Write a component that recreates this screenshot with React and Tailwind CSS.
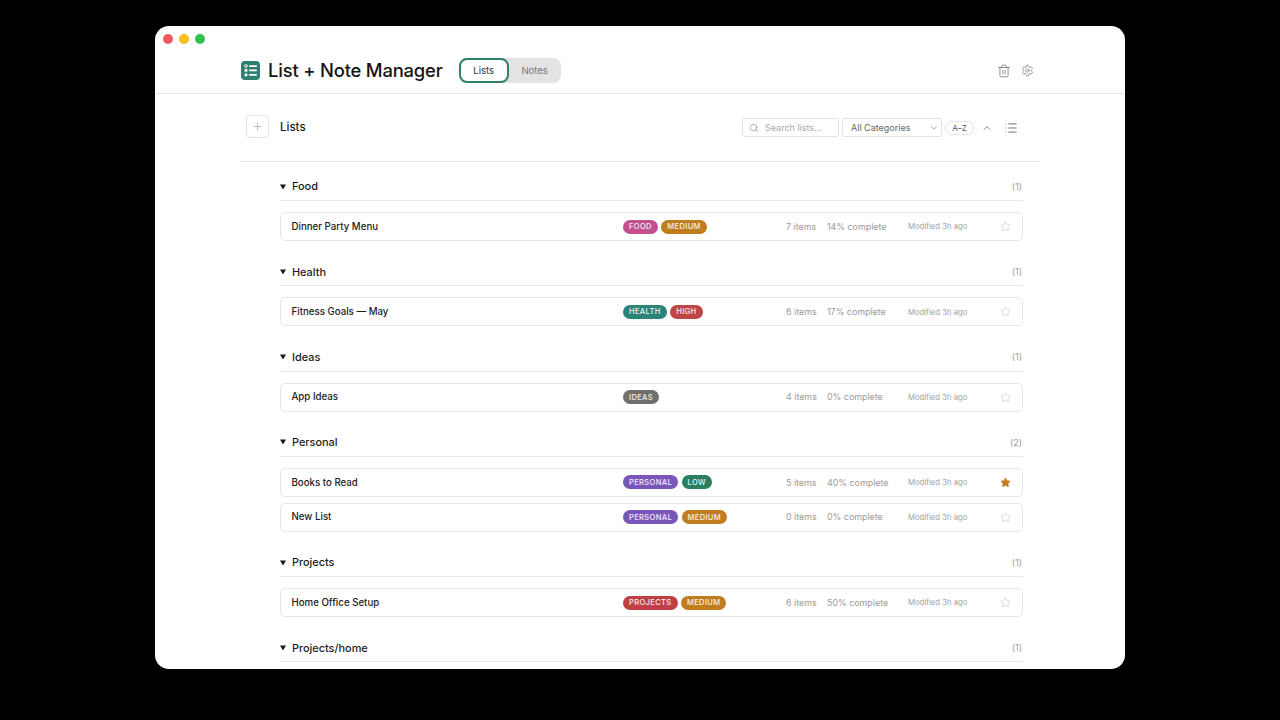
import React from "react";
import { Trash2, Settings, Search, ChevronDown, ChevronUp, List, Star, Plus } from "lucide-react";

const C = {
  FOOD: "bg-[#c4518f]",
  MEDIUM: "bg-[#c27c20]",
  HEALTH: "bg-[#2a8578]",
  HIGH: "bg-[#c04545]",
  IDEAS: "bg-[#6f6f6f]",
  PERSONAL: "bg-[#7a56b8]",
  LOW: "bg-[#2a7f5f]",
  PROJECTS: "bg-[#c04045]",
};

const sections = [
  { name: "Food", count: 1, rows: [{ n: "Dinner Party Menu", tags: ["FOOD", "MEDIUM"], items: "7 items", pct: "14% complete" }] },
  { name: "Health", count: 1, rows: [{ n: "Fitness Goals — May", tags: ["HEALTH", "HIGH"], items: "6 items", pct: "17% complete" }] },
  { name: "Ideas", count: 1, rows: [{ n: "App Ideas", tags: ["IDEAS"], items: "4 items", pct: "0% complete" }] },
  {
    name: "Personal",
    count: 2,
    rows: [
      { n: "Books to Read", tags: ["PERSONAL", "LOW"], items: "5 items", pct: "40% complete", star: true },
      { n: "New List", tags: ["PERSONAL", "MEDIUM"], items: "0 items", pct: "0% complete" },
    ],
  },
  { name: "Projects", count: 1, rows: [{ n: "Home Office Setup", tags: ["PROJECTS", "MEDIUM"], items: "6 items", pct: "50% complete" }] },
  { name: "Projects/home", count: 1, rows: [] },
];

function Row({ r }) {
  return (
    <div className="flex items-center h-[29px] pl-[10.5px] rounded-[5px] border border-[#e6e6e6] bg-white">
      <div className="w-[331.5px] shrink-0 text-[9.7px] font-medium text-[#1c1c1c] pt-[1px]">{r.n}</div>
      <div className="w-[163px] shrink-0 flex gap-[3.5px]">
        {r.tags.map((t) => (
          <span key={t} className={`h-[14px] px-[6px] rounded-full flex items-center text-[7.5px] font-medium tracking-[0.05em] text-white/90 ${C[t]}`}>
            {t}
          </span>
        ))}
      </div>
      <div className="w-[41px] shrink-0 text-[8.9px] text-[#9a9a9a]">{r.items}</div>
      <div className="w-[81px] shrink-0 text-[8.9px] text-[#9a9a9a]">{r.pct}</div>
      <div className="w-[92px] shrink-0 text-[7.7px] text-[#a0a0a0] pt-[1px]">Modified 3h ago</div>
      <Star
        size={11}
        strokeWidth={1.2}
        className={r.star ? "text-[#c27c20] fill-[#c27c20]" : "text-[#bdbdbd]"}
      />
    </div>
  );
}

function Section({ s }) {
  return (
    <div className="mb-[16.33px]">
      <div className="flex items-center h-[29px] border-b border-[#e8e8e8] pt-[1px]">
        <svg width="6" height="6" viewBox="0 0 6 6" className="mr-[6px]">
          <polygon points="0,0.5 6,0.5 3,5.5" fill="#1a1a1a" />
        </svg>
        <span className="text-[10.9px] font-medium text-[#1c1c1c]">{s.name}</span>
        <span className="ml-auto mr-[1px] text-[9px] text-[#9a9a9a]">({s.count})</span>
      </div>
      {s.rows.length > 0 && (
        <div className="mt-[11px] flex flex-col gap-[5.7px]">
          {s.rows.map((r) => (
            <Row key={r.n} r={r} />
          ))}
        </div>
      )}
    </div>
  );
}

export default function App() {
  return (
    <div className="w-[1280px] h-[720px] bg-black pt-[26px] pl-[155px] overflow-hidden font-['Inter',sans-serif]">
      <div className="w-[970px] h-[643px] bg-white rounded-[14px] overflow-hidden flex flex-col">
        <header className="shrink-0 h-[68px] border-b border-[#e4e4e4] pt-2">
          <div className="flex gap-[6px] pl-2 h-2.5">
            <span className="w-2.5 h-2.5 rounded-full bg-[#f2575a]" />
            <span className="w-2.5 h-2.5 rounded-full bg-[#f8bd1c]" />
            <span className="w-2.5 h-2.5 rounded-full bg-[#2fc14a]" />
          </div>
          <div className="mt-[14px] h-[25px] flex items-center pl-[86px] pr-[91px]">
            <svg width="19" height="19" viewBox="0 0 19 19" className="shrink-0">
              <rect width="19" height="19" rx="4" fill="#2f7f6e" />
              <circle cx="5" cy="5" r="1.4" fill="none" stroke="#fff" strokeWidth="0.9" />
              <rect x="3.6" y="8" width="2.8" height="2.8" rx="0.6" fill="#fff" />
              <rect x="3.6" y="12.4" width="2.8" height="2.8" rx="0.6" fill="#fff" />
              <rect x="8" y="4.2" width="8" height="1.7" rx="0.8" fill="#fff" />
              <rect x="8" y="8.6" width="8" height="1.7" rx="0.8" fill="#fff" />
              <rect x="8" y="13" width="8" height="1.7" rx="0.8" fill="#fff" />
            </svg>
            <h1 className="ml-[8px] pt-[1px] text-[18.4px] font-medium text-[#141414] tracking-[-0.01em] whitespace-nowrap">List + Note Manager</h1>
            <div className="ml-[16px] w-[102px] h-[25px] flex rounded-[8px] bg-[#e3e3e3]">
              <div className="w-[50px] h-full flex items-center justify-center rounded-[8px] bg-white border-2 border-[#2f7f6e] text-[9.5px] font-normal text-[#333] pt-[1px]">Lists</div>
              <div className="flex-1 flex items-center justify-center text-[9.5px] font-normal text-[#777] pt-[1px]">Notes</div>
            </div>
            <div className="ml-auto flex items-center gap-[10px] text-[#6f6f6f]">
              <Trash2 size={14} strokeWidth={1.3} />
              <Settings size={13} strokeWidth={1.3} />
            </div>
          </div>
        </header>

        <div className="ml-[86px] w-[798px] flex-1 min-h-0 overflow-hidden">
          <div className="h-[68px] flex items-center border-b border-[#e4e4e4] pl-[5px] pr-[21px]">
            <div className="w-[23px] h-[23px] mb-[2px] rounded-[4px] border border-[#e2e2e2] flex items-center justify-center text-[#999]">
              <Plus size={13} strokeWidth={1.2} />
            </div>
            <span className="ml-[11px] text-[11.5px] font-medium text-[#1c1c1c]">Lists</span>
            <div className="ml-auto flex items-center">
              <div className="w-[97px] h-[19px] rounded-[3px] border border-[#e2e2e2] flex items-center pl-[6px] text-[#777]">
                <Search size={10} strokeWidth={1.3} />
                <span className="ml-[6px] text-[9px] text-[#aaa]">Search lists...</span>
              </div>
              <div className="ml-[3px] w-[100px] h-[19px] rounded-[3px] border border-[#e2e2e2] flex items-center pl-[8px] pr-[2px] text-[9px] text-[#666]">
                All Categories
                <ChevronDown size={10} strokeWidth={1.4} className="ml-auto text-[#666]" />
              </div>
              <div className="ml-[3px] w-[29px] h-[14px] rounded-full border border-[#e2e2e2] flex items-center justify-center text-[8px] font-normal text-[#555]">A–Z</div>
              <ChevronUp size={12} strokeWidth={1.4} className="ml-[7px] text-[#555]" />
              <List size={14} strokeWidth={1.4} className="ml-[11px] text-[#555]" />
            </div>
          </div>
          <div className="pt-[10px] pl-[39px] pr-[16px]">
            {sections.map((s) => (
              <Section key={s.name} s={s} />
            ))}
          </div>
        </div>
      </div>
    </div>
  );
}
